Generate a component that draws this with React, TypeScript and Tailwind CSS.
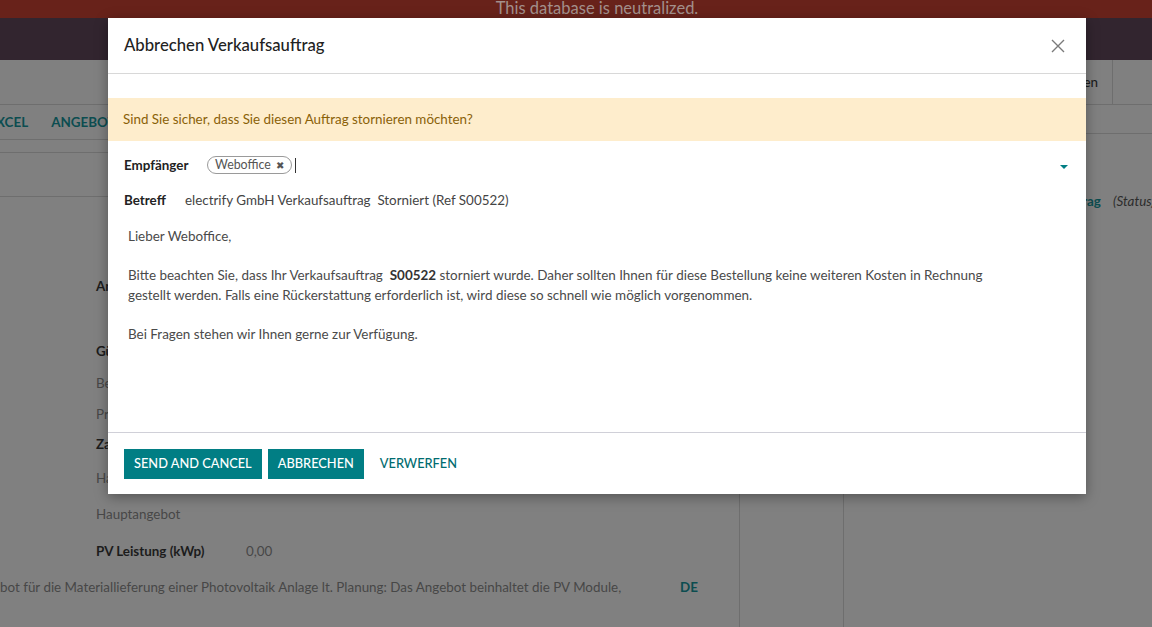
import React from 'react'

const sheetRows = [
  { label: 'Angebotsdatum', bold: true, mt: 'mt-[79px]' },
  { label: 'Gültigkeit', bold: true, mt: 'mt-[45px]' },
  { label: 'Bearbeiter', bold: false, mt: 'mt-[12px]' },
  { label: 'Projekt', bold: false, mt: 'mt-[11px]' },
  { label: 'Zahlungsbedingungen', bold: true, mt: 'mt-[10px]' },
  { label: 'Hauptangebot?', bold: false, mt: 'mt-[14px]' },
  { label: 'Hauptangebot', bold: false, mt: 'mt-[16px]' },
]

function Background() {
  return (
    <div className="flex h-full flex-col">
      <div className="h-[18px] bg-[#68221a] pl-[42px] text-center text-[16.5px] leading-[17px] text-[#a3908c]">
        This database is neutralized.
      </div>
      <div className="h-[42px] bg-[#32252f]" />

      {/* control panel */}
      <div className="flex h-[45px] border-b border-[#6e6e6e]">
        <div className="flex-1" />
        <div className="flex items-center pr-[14px] text-[13.4px] font-medium text-[#1c1c1c]">Senden</div>
        <div className="w-[40px] border-l border-[#6e6e6e]" />
      </div>

      <div className="flex flex-1">
        <div className="flex w-[843px] shrink-0 flex-col">
          <div className="flex h-[35px] items-center gap-[23px] overflow-hidden border-b border-[#6e6e6e] text-[13.4px] font-bold text-[#0c4d50]">
            <span className="-ml-[4px]">XCEL</span>
            <span>ANGEBOT</span>
          </div>
          <div className="h-[13px] border-b border-[#6e6e6e]" />
          <div className="h-[44px] border-b border-[#6e6e6e]" />
          <div className="flex flex-1">
            <div className="flex w-[740px] flex-col border-r border-[#6e6e6e] text-[13.4px] leading-[20px] text-[#474747]">
              {sheetRows.map((r) => (
                <div key={r.label + r.mt} className={`${r.mt} pl-[96px] ${r.bold ? 'font-bold text-[#1c1c1c]' : ''}`}>
                  {r.label}
                </div>
              ))}
              <div className="mt-[17px] flex pl-[96px]">
                <span className="w-[150px] font-bold text-[#1c1c1c]">PV Leistung (kWp)</span>
                <span>0,00</span>
              </div>
              <div className="mt-[16px] flex">
                <span className="w-[680px]">bot für die Materiallieferung einer Photovoltaik Anlage lt. Planung: Das Angebot beinhaltet die PV Module,</span>
                <span className="font-bold text-[#0c4d50]">DE</span>
              </div>
            </div>
          </div>
        </div>
        <div className="flex min-w-0 flex-1 flex-col overflow-hidden border-l border-[#6e6e6e]">
          <div className="h-[29px] border-b border-[#6e6e6e]" />
          <div className="mt-[57px] flex gap-[12px] whitespace-nowrap pl-[212px] text-[13.4px] leading-[20px]">
            <span className="font-bold text-[#0c4d50]">Auftrag</span>
            <span className="italic text-[#2c2c2c]">(Status)</span>
          </div>
        </div>
      </div>
    </div>
  )
}

function CancelDialog() {
  return (
    <div className="absolute left-[108px] top-[18px] flex h-[476px] w-[978px] flex-col bg-white shadow-[0_3px_12px_rgba(0,0,0,0.35)]">
      <div className="flex h-[56px] items-center justify-between border-b border-[#d8d8d8] px-[16px]">
        <h4 className="text-[16.7px] font-medium text-[#222]">Abbrechen Verkaufsauftrag</h4>
        <button className="flex h-[24px] w-[24px] items-center justify-center">
          <svg width="14" height="14" viewBox="0 0 14 14" fill="none" stroke="#7a7a7a" strokeWidth="1.4">
            <path d="M1 1 L13 13 M13 1 L1 13" />
          </svg>
        </button>
      </div>

      <div className="flex-1 pt-[24px]">
        <div className="flex h-[43px] items-center bg-[#feedcc] px-[15px] text-[13.4px] text-[#8a6108]">
          Sind Sie sicher, dass Sie diesen Auftrag stornieren möchten?
        </div>

        <div className="px-[16px] text-[13.4px]">
          <div className="mt-[14px] flex h-[20px] items-center">
            <span className="w-[83px] font-bold text-[#222]">Empfänger</span>
            <span className="flex h-[18px] items-center rounded-full border border-[#9a9a9a] px-[7px] text-[12.4px] text-[#555]">
              Weboffice
              <span className="ml-[5px] text-[10px] leading-none text-[#555]">✖</span>
            </span>
            <span className="ml-[3px] h-[15px] w-px bg-[#333]" />
            <span className="flex-1" />
            <svg width="8" height="4" viewBox="0 0 8 4" className="mr-[2px] mt-[4px]">
              <path d="M0 0 L8 0 L4 4 Z" fill="#017e84" />
            </svg>
          </div>
          <div className="mt-[15px] flex h-[20px] items-center">
            <span className="w-[61px] font-bold text-[#222]">Betreff</span>
            <span className="text-[#444]">electrify GmbH Verkaufsauftrag&nbsp; Storniert (Ref S00522)</span>
          </div>

          <div className="mt-[17px] pl-[4px] text-[13.45px] leading-[19.5px] text-[#4a4a4a]">
            <p>Lieber Weboffice,</p>
            <p className="mt-[19.5px]">
              Bitte beachten Sie, dass Ihr Verkaufsauftrag&nbsp; <b className="text-[#333]">S00522</b> storniert wurde. Daher sollten Ihnen für diese Bestellung keine weiteren Kosten in Rechnung
              <br />
              gestellt werden. Falls eine Rückerstattung erforderlich ist, wird diese so schnell wie möglich vorgenommen.
            </p>
            <p className="mt-[19.5px]">Bei Fragen stehen wir Ihnen gerne zur Verfügung.</p>
          </div>
        </div>
      </div>

      <div className="flex h-[62px] items-center gap-[6px] border-t border-[#d0d0d8] px-[16px] text-[12.8px] font-medium">
        <button className="h-[30px] bg-[#017e84] px-[10px] text-white">SEND AND CANCEL</button>
        <button className="h-[30px] bg-[#017e84] px-[10px] text-white">ABBRECHEN</button>
        <button className="h-[30px] px-[10px] text-[#016c70]">VERWERFEN</button>
      </div>
    </div>
  )
}

export default function App() {
  return (
    <div className="relative h-[627px] w-[1152px] overflow-hidden bg-[#808080] font-['Lato',sans-serif]">
      <Background />
      <CancelDialog />
    </div>
  )
}
